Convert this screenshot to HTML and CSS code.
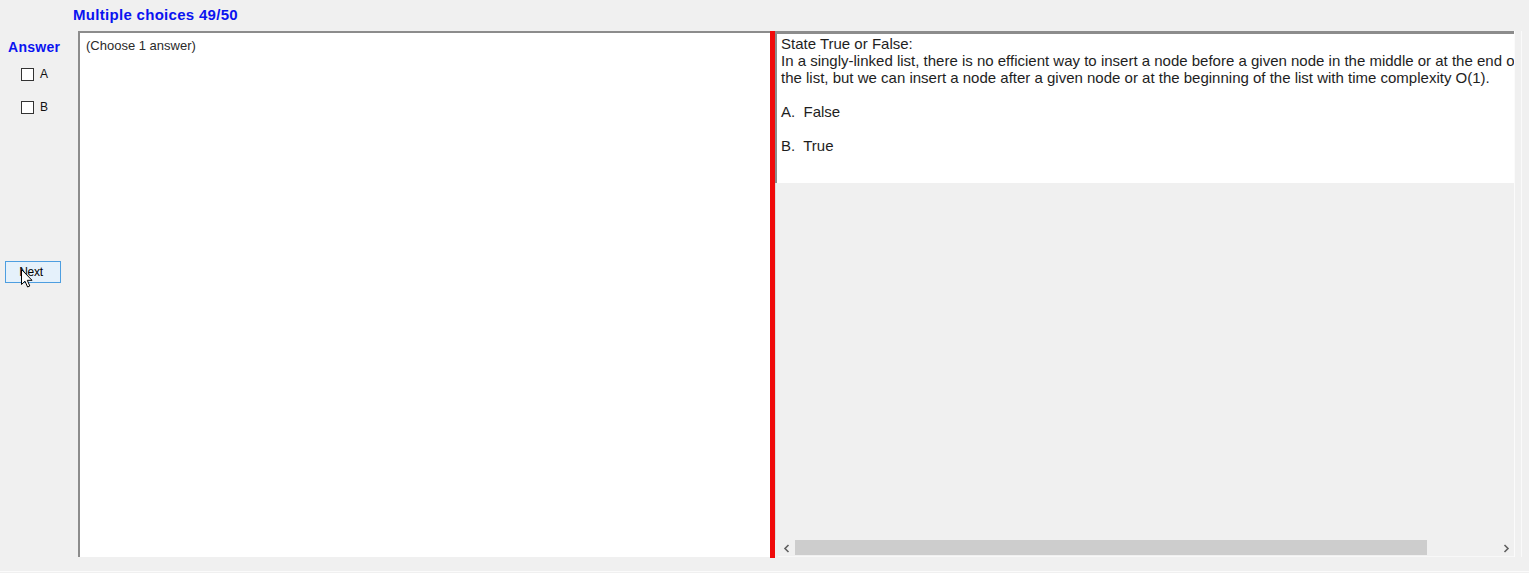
FILE: index.html
```html
<!DOCTYPE html>
<html>
<head>
<meta charset="utf-8">
<link rel="stylesheet" href="styles.css">
</head>
<body>
<div class="app">
  <div class="title">Multiple choices 49/50</div>
  <div class="main">
    <div class="sidebar">
      <div class="answer">Answer</div>
      <label class="opt opt-a"><span class="box"></span><span class="opt-label">A</span></label>
      <label class="opt opt-b"><span class="box"></span><span class="opt-label">B</span></label>
      <div class="next-wrap">
        <button class="next">Next</button>
        <svg class="cursor" width="12" height="19" viewBox="0 0 12 19"><path d="M0.5 0.5 L0.5 15.5 L4 12.2 L6.6 18 L8.8 17 L6.3 11.3 L11 11.3 Z" fill="#fff" stroke="#000" stroke-width="1" stroke-linejoin="miter"/></svg>
      </div>
    </div>
    <div class="left-panel">(Choose 1 answer)</div>
    <div class="red-bar"></div>
    <div class="right-panel">
      <div class="question">
        <div class="line">State True or False:</div>
        <div class="line">In a singly-linked list, there is no efficient way to insert a node before a given node in the middle or at the end of</div>
        <div class="line">the list, but we can insert a node after a given node or at the beginning of the list with time complexity O(1).</div>
        <div class="line blank">&nbsp;</div>
        <div class="line">A.&nbsp; False</div>
        <div class="line blank">&nbsp;</div>
        <div class="line">B.&nbsp; True</div>
      </div>
      <div class="gray-area"></div>
      <div class="hscroll">
        <div class="arrow"><svg width="8" height="9" viewBox="0 0 8 9"><path d="M5.5 1 L2 4.5 L5.5 8" fill="none" stroke="#606060" stroke-width="1.6"/></svg></div>
        <div class="track"><div class="thumb"></div></div>
        <div class="arrow"><svg width="8" height="9" viewBox="0 0 8 9"><path d="M2.5 1 L6 4.5 L2.5 8" fill="none" stroke="#606060" stroke-width="1.6"/></svg></div>
      </div>
    </div>
    <div class="right-edge"></div>
  </div>
  <div class="footer"></div>
</div>
</body>
</html>
```

FILE: styles.css
```css
html, body {
  margin: 0;
  padding: 0;
}
body {
  background: #f0f0f0;
  width: 1529px;
  height: 573px;
  overflow: hidden;
  font-family: "Liberation Sans", Arial, sans-serif;
}
.app {
  display: flex;
  flex-direction: column;
  height: 573px;
}
.title {
  height: 25px;
  padding-top: 6px;
  padding-left: 73px;
  font-weight: bold;
  font-size: 15px;
  line-height: 17px;
  letter-spacing: 0.3px;
  color: #0a14f0;
  box-sizing: content-box;
}
.main {
  display: flex;
  height: 527px;
}
.sidebar {
  width: 78px;
  flex: none;
  display: flex;
  flex-direction: column;
}
.answer {
  margin-top: 8px;
  padding-left: 8px;
  font-weight: bold;
  font-size: 14px;
  line-height: 16px;
  letter-spacing: 0.3px;
  color: #0a14f0;
}
.opt {
  display: flex;
  align-items: center;
  padding-left: 21px;
  gap: 6px;
  height: 13px;
}
.opt-a { margin-top: 13px; }
.opt-b { margin-top: 20px; }
.box {
  width: 13px;
  height: 13px;
  box-sizing: border-box;
  border: 1px solid #333;
  background: #fff;
}
.opt-label {
  font-size: 12px;
  line-height: 13px;
  color: #111;
}
.next-wrap {
  position: relative;
  margin-top: 147px;
  margin-left: 5px;
}
.next {
  width: 56px;
  height: 22px;
  box-sizing: border-box;
  border: 1px solid #4d9ee0;
  background: #e5f1fb;
  font-family: "Liberation Sans", Arial, sans-serif;
  font-size: 12px;
  color: #000;
  padding: 0 4px 0 0;
  margin: 0;
  letter-spacing: -0.3px;
}
.cursor {
  position: absolute;
  left: 16px;
  top: 8px;
}
.left-panel {
  width: 692px;
  height: 526px;
  flex: none;
  box-sizing: border-box;
  background: #fff;
  border-top: 2px solid #8c8c8c;
  border-left: 2px solid #8c8c8c;
  padding: 5px 0 0 6px;
  font-size: 13px;
  line-height: 15px;
  color: #2a2a2a;
}
.red-bar {
  width: 5px;
  height: 527px;
  flex: none;
  background: #f00a0a;
}
.right-panel {
  width: 740px;
  height: 526px;
  flex: none;
  display: flex;
  flex-direction: column;
  box-sizing: border-box;
  border-right: 1px solid #fbfbfb;
}
.question {
  height: 152px;
  flex: none;
  box-sizing: border-box;
  background: #fff;
  border-top: 3px solid #8c8c8c;
  border-left: 2px solid #8c8c8c;
  padding: 1px 0 0 4px;
  overflow: hidden;
  white-space: nowrap;
  font-size: 15px;
  line-height: 17px;
  color: #1e1e1e;
}
.gray-area {
  flex: 1;
  border-left: 1px solid #dcdcdc;
}
.hscroll {
  height: 16px;
  flex: none;
  display: flex;
  margin-left: 3px;
  background: #f0f0f0;
  border-bottom: 1px solid #f8f8f8;
}
.arrow {
  width: 17px;
  display: flex;
  align-items: center;
  justify-content: center;
  flex: none;
}
.track {
  flex: 1;
  display: flex;
}
.thumb {
  width: 632px;
  height: 15px;
  background: #cdcdcd;
}
.right-edge {
  width: 6px;
  height: 526px;
  border-right: 1px solid #fafafa;
}
.footer {
  height: 13px;
  border-bottom: 1px solid #fbfbfb;
}
```
